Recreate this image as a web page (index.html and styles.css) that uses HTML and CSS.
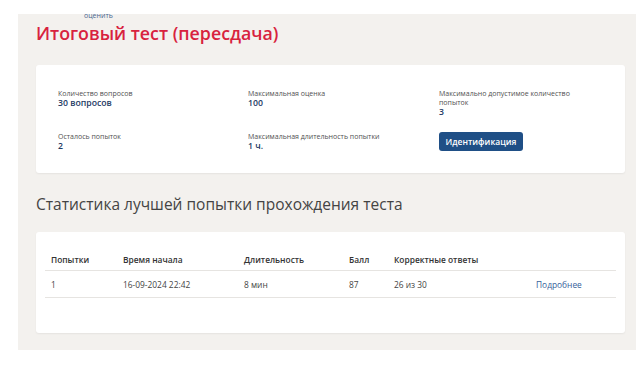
FILE: index.html
```html
<!DOCTYPE html>
<html lang="ru">
<head>
  <meta charset="UTF-8">
  <title>Итоговый тест (пересдача)</title>
  <link rel="stylesheet" href="styles.css">
</head>
<body>

  <div class="page">
    <div class="crumbs"><a href="#">оценить</a></div>

    <h1 class="title">Итоговый тест (пересдача)</h1>

    <div class="card info">
      <div class="item">
        <div class="label">Количество вопросов</div>
        <div class="value">30 вопросов</div>
      </div>
      <div class="item">
        <div class="label">Максимальная оценка</div>
        <div class="value">100</div>
      </div>
      <div class="item">
        <div class="label">Максимально допустимое количество попыток</div>
        <div class="value">3</div>
      </div>
      <div class="item">
        <div class="label">Осталось попыток</div>
        <div class="value">2</div>
      </div>
      <div class="item">
        <div class="label">Максимальная длительность попытки</div>
        <div class="value">1 ч.</div>
      </div>
      <div class="item">
        <button class="btn">Идентификация</button>
      </div>
    </div>

    <h2 class="subtitle">Статистика лучшей попытки прохождения теста</h2>

    <div class="card stats">
      <table>
        <thead>
          <tr>
            <th class="c1">Попытки</th>
            <th class="c2">Время начала</th>
            <th class="c3">Длительность</th>
            <th class="c4">Балл</th>
            <th class="c5">Корректные ответы</th>
            <th class="c6"></th>
          </tr>
        </thead>
        <tbody>
          <tr>
            <td>1</td>
            <td>16-09-2024 22:42</td>
            <td>8 мин</td>
            <td>87</td>
            <td>26 из 30</td>
            <td><a href="#">Подробнее</a></td>
          </tr>
        </tbody>
      </table>
    </div>
  </div>

</body>
</html>
```

FILE: styles.css
```css
    :root {
      --page-bg: #f3f1ee;
      --card-bg: white;
      --title: #d8223e;
      --value: #1d3a64;
      --label: #505050;
      --link: #36619a;
      --btn-bg: #1f4f86;
      --line: #e6e4e1;
    }

    body {
      margin: 0;
      background: white;
      font-family: 'Open Sans', sans-serif;
    }

    .page {
      margin: 14px 0 0 18px;
      height: 336px;
      padding: 0 11px 0 18px;
      background: var(--page-bg);
      overflow: hidden;
      box-sizing: border-box;
    }

    .crumbs {
      height: 4px;
      margin-left: 48px;
      font-size: 7px;
      line-height: 4px;
    }

    .crumbs a {
      color: #4a6690;
      text-decoration: none;
    }

    .title {
      margin: 3px 0 0;
      font-size: 17.8px;
      line-height: 24px;
      font-weight: 600;
      color: var(--title);
    }

    .card {
      background: var(--card-bg);
      border-radius: 3px;
      box-shadow: 0 1px 2px rgba(0, 0, 0, 0.06);
    }

    .info {
      margin-top: 20px;
      display: grid;
      grid-template-columns: 190px 191px 150px;
      row-gap: 15px;
      padding: 24px 22px 22px;
    }

    .label {
      font-size: 7px;
      line-height: 9px;
      color: var(--label);
    }

    .value {
      font-size: 8.7px;
      line-height: 10px;
      font-weight: 600;
      color: var(--value);
    }

    .btn {
      display: block;
      width: 84px;
      height: 19px;
      padding: 0;
      border: none;
      border-radius: 3px;
      background: var(--btn-bg);
      color: white;
      font-family: 'Open Sans', sans-serif;
      font-size: 8.5px;
      font-weight: 600;
      cursor: pointer;
    }

    .subtitle {
      margin: 20px 0 0;
      font-size: 15.5px;
      line-height: 22px;
      font-weight: 400;
      color: #444;
    }

    .stats {
      margin-top: 17px;
      padding: 16px 9px 35px;
    }

    table {
      width: 100%;
      border-collapse: collapse;
      table-layout: fixed;
      font-size: 8.4px;
      color: #444;
    }

    th {
      height: 22px;
      padding: 0 0 0 6px;
      text-align: left;
      font-weight: 600;
      color: #333;
      border-bottom: 1px solid var(--line);
    }

    td {
      height: 26px;
      padding: 0 0 0 6px;
      border-bottom: 1px solid var(--line);
    }

    td a {
      color: var(--link);
      text-decoration: none;
    }

    .c1 { width: 66px; }
    .c2 { width: 115px; }
    .c3 { width: 99px; }
    .c4 { width: 39px; }
    .c5 { width: 136px; }
```
